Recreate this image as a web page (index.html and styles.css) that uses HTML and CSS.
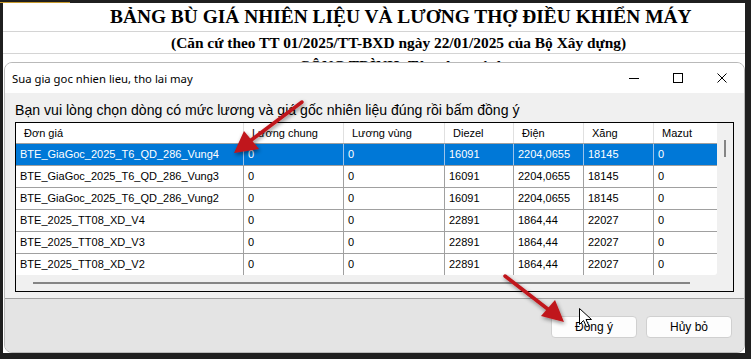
FILE: index.html
```html
<!DOCTYPE html>
<html lang="vi">
<head>
<meta charset="UTF-8">
<title>Sua gia goc nhien lieu, tho lai may</title>
<link rel="stylesheet" href="styles.css">
</head>
<body>
<div class="screen">
	<div class="topline"></div>
	<!-- Sheet behind the dialog -->
	<div class="sheet">
		<div class="srow r1"><span class="title">BẢNG BÙ GIÁ NHIÊN LIỆU VÀ LƯƠNG THỢ ĐIỀU KHIỂN MÁY</span></div>
		<div class="srow r2"><span class="sub">(Căn cứ theo TT 01/2025/TT-BXD ngày 22/01/2025 của Bộ Xây dựng)</span></div>
		<div class="srow r3"><span class="proj">CÔNG TRÌNH: Tên công trình</span></div>
	</div>

	<!-- Dialog -->
	<div class="dialog">
		<div class="titlebar">
			<span class="caption">Sua gia goc nhien lieu, tho lai may</span>
			<div class="wbtns">
				<span class="wbtn"><svg width="10" height="10" viewBox="0 0 10 10"><line x1="0" y1="5.5" x2="10" y2="5.5" stroke="#000" stroke-width="1"/></svg></span>
				<span class="wbtn"><svg width="10" height="10" viewBox="0 0 10 10"><rect x="0.5" y="0.5" width="9" height="9" fill="none" stroke="#000" stroke-width="1"/></svg></span>
				<span class="wbtn"><svg width="10" height="10" viewBox="0 0 10 10"><path d="M0.5 0.5 L9.5 9.5 M9.5 0.5 L0.5 9.5" stroke="#000" stroke-width="1"/></svg></span>
			</div>
		</div>
		<div class="body">
			<div class="label">Bạn vui lòng chọn dòng có mức lương và giá gốc nhiên liệu đúng rồi bấm đồng ý</div>
			<div class="grid">
				<div class="table">
					<div class="trow head">
						<span>Đơn giá</span><span>Lương chung</span><span>Lương vùng</span><span>Diezel</span><span>Điện</span><span>Xăng</span><span>Mazut</span>
					</div>
					<div class="trow sel">
						<span>BTE_GiaGoc_2025_T6_QD_286_Vung4</span><span>0</span><span>0</span><span>16091</span><span>2204,0655</span><span>18145</span><span>0</span>
					</div>
					<div class="trow">
						<span>BTE_GiaGoc_2025_T6_QD_286_Vung3</span><span>0</span><span>0</span><span>16091</span><span>2204,0655</span><span>18145</span><span>0</span>
					</div>
					<div class="trow">
						<span>BTE_GiaGoc_2025_T6_QD_286_Vung2</span><span>0</span><span>0</span><span>16091</span><span>2204,0655</span><span>18145</span><span>0</span>
					</div>
					<div class="trow">
						<span>BTE_2025_TT08_XD_V4</span><span>0</span><span>0</span><span>22891</span><span>1864,44</span><span>22027</span><span>0</span>
					</div>
					<div class="trow">
						<span>BTE_2025_TT08_XD_V3</span><span>0</span><span>0</span><span>22891</span><span>1864,44</span><span>22027</span><span>0</span>
					</div>
					<div class="trow">
						<span>BTE_2025_TT08_XD_V2</span><span>0</span><span>0</span><span>22891</span><span>1864,44</span><span>22027</span><span>0</span>
					</div>
				</div>
				<div class="vscroll"><div class="thumb"></div></div>
				<div class="hscroll"><div class="bar"></div></div>
				<div class="corner"></div>
			</div>
		</div>
		<div class="footer">
			<button class="btn">Đồng ý</button>
			<button class="btn">Hủy bỏ</button>
		</div>
	</div>

	<!-- Annotation arrows and mouse cursor -->
	<svg class="marks" width="751" height="359" viewBox="0 0 751 359">
		<filter id="shade" x="-30%" y="-30%" width="160%" height="160%">
			<feGaussianBlur in="SourceAlpha" stdDeviation="2"/>
			<feOffset dx="1" dy="2" result="b"/>
			<feComponentTransfer><feFuncA type="linear" slope="0.45"/></feComponentTransfer>
			<feMerge><feMergeNode/><feMergeNode in="SourceGraphic"/></feMerge>
		</filter>
		<g filter="url(#shade)" fill="#c0141a" stroke="#c0141a">
			<line x1="302" y1="102" x2="250" y2="141" stroke-width="3.5" stroke-linecap="round"/>
			<polygon points="234,153 244,131 259,149" stroke="none"/>
			<line x1="505" y1="276" x2="549" y2="310" stroke-width="3.5" stroke-linecap="round"/>
			<polygon points="564,322 541,316 555,300" stroke="none"/>
		</g>
		<path d="M579.5 308.5 L579.5 324.5 L583.5 320.5 L586.5 327 L589 326 L586 319.5 L591.5 319.5 Z" fill="#fff" stroke="#000" stroke-width="1" stroke-linejoin="round"/>
	</svg>
</div>
</body>
</html>
```

FILE: styles.css
```css
html, body {
  margin: 0;
  padding: 0;
}

body {
  background: #1f1f1f;
}

.screen {
  position: relative;
  width: 751px;
  height: 359px;
  overflow: hidden;
  box-sizing: border-box;
  padding: 3px 6px 0 3px;
  background: #1f1f1f;
}

.topline {
  position: absolute;
  left: 0;
  top: 2px;
  width: 70px;
  height: 1px;
  background: #c89a2c;
}

/* Sheet */
.sheet {
  height: 350px;
  background: #fff;
  font-family: "Liberation Serif", serif;
  font-weight: bold;
  color: #000;
}
.srow {
  box-sizing: border-box;
  border-bottom: 1px solid #d4d4d4;
  white-space: nowrap;
}
.srow.r1 {
  height: 29px;
  padding: 3px 0 0 107px;
  font-size: 19.4px;
}
.srow.r2 {
  height: 22px;
  padding: 2px 0 0 168px;
  font-size: 15.4px;
}
.srow.r3 {
  height: 22px;
  padding: 3px 0 0 296px;
  font-size: 15.4px;
  border-bottom: none;
}

/* Dialog */
.dialog {
  position: absolute;
  left: 4px;
  top: 62px;
  width: 741px;
  height: 291px;
  box-sizing: border-box;
  border: 1px solid #b9b9b9;
  border-radius: 8px;
  overflow: hidden;
  display: flex;
  flex-direction: column;
  background: #f0f0f0;
}

.titlebar {
  height: 30px;
  flex: none;
  background: #fff;
  display: flex;
  align-items: center;
  justify-content: space-between;
}
.caption {
  padding-left: 7px;
  font-family: "Noto Sans", sans-serif;
  font-size: 11.3px;
  color: #000;
}
.wbtns {
  display: flex;
  height: 100%;
}
.wbtn {
  width: 44px;
  display: flex;
  align-items: center;
  justify-content: center;
}
.wbtn svg {
  display: block;
}

.body {
  height: 205px;
  flex: none;
  box-sizing: border-box;
  padding: 9px 0 0 10px;
}
.label {
  height: 17px;
  line-height: 17px;
  margin-bottom: 3px;
  font-family: "Liberation Sans", sans-serif;
  font-size: 14.1px;
  color: #000;
  white-space: nowrap;
}

.grid {
  width: 719px;
  height: 170px;
  box-sizing: border-box;
  border: 1px solid #000;
  display: grid;
  grid-template-columns: 701px 16px;
  grid-template-rows: 152px 16px;
  background: #f0f0f0;
}
.table {
  background: #fff;
  overflow: hidden;
  font-family: "Liberation Sans", sans-serif;
  font-size: 11px;
  color: #000;
  border-bottom-right-radius: 3px;
}
.trow {
  display: grid;
  grid-template-columns: 228px 100px 101px 69px 70px 70px 63px;
  height: 22px;
  box-sizing: border-box;
  border-bottom: 1px solid #a0a0a0;
}
.trow span {
  box-sizing: border-box;
  border-right: 1px solid #a0a0a0;
  padding-left: 4px;
  line-height: 21px;
  white-space: nowrap;
  overflow: hidden;
}
.trow span:last-child {
  border-right: none;
}
.trow.head {
  height: 21px;
}
.trow.head span {
  border-right-color: #e0e0e0;
  padding-left: 8px;
  line-height: 20px;
}
.trow.sel {
  background: #0078d7;
  color: #fff;
}
.trow.sel span {
  border-right-color: #9cc3ea;
}

.vscroll {
  position: relative;
}
.vscroll .thumb {
  position: absolute;
  left: 7px;
  top: 17px;
  width: 2px;
  height: 17px;
  background: #858585;
}
.hscroll {
  position: relative;
}
.hscroll .bar {
  position: absolute;
  left: 17px;
  top: 7px;
  width: 657px;
  height: 2px;
  background: #858585;
}

.footer {
  flex: 1;
  border-top: 1px solid #a0a0a0;
  background: #e4e4e4;
  display: flex;
  justify-content: flex-end;
  align-items: flex-start;
  gap: 9px;
  padding: 17px 12px 0 0;
}
.btn {
  width: 86px;
  height: 22px;
  box-sizing: border-box;
  border: 1px solid #d0d0d0;
  border-radius: 4px;
  background: #fdfdfd;
  font-family: "Liberation Sans", sans-serif;
  font-size: 12px;
  color: #000;
  padding: 0;
}

.marks {
  position: absolute;
  left: 0;
  top: 0;
  pointer-events: none;
}
```
